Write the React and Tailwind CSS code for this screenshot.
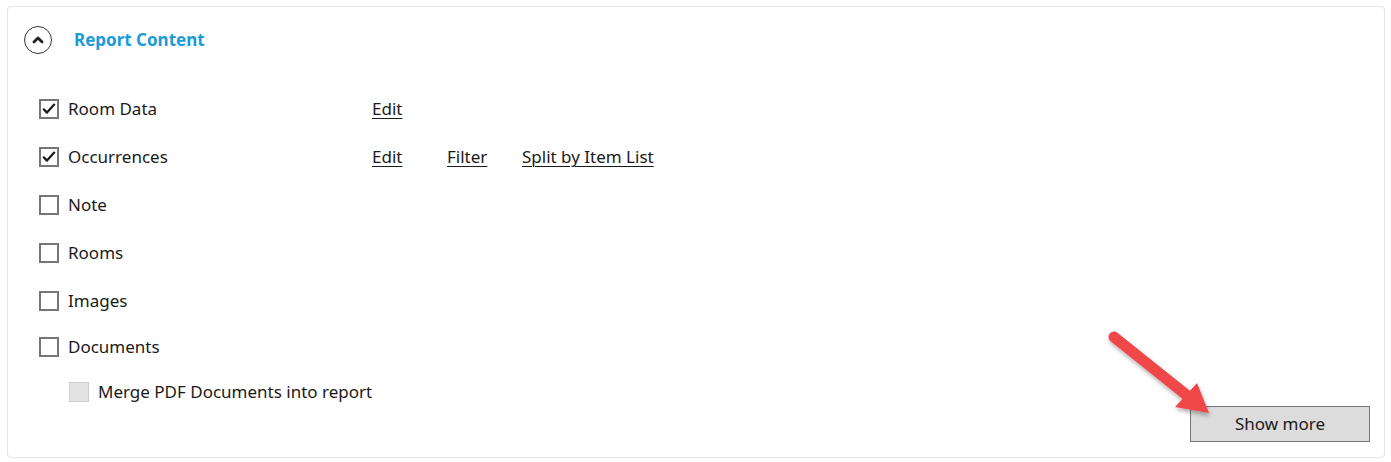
import React, { useState } from "react";

const Check = () => (
  <svg viewBox="0 0 20 20" className="w-[16px] h-[16px]">
    <path d="M3.5 10.5l4 4 9-10" fill="none" stroke="#1a1a1a" strokeWidth="2.8" strokeLinecap="round" strokeLinejoin="round" />
  </svg>
);

const Box = ({ checked, onClick }) => (
  <button
    type="button"
    onClick={onClick}
    className="w-[20px] h-[20px] border-2 border-[#767676] bg-white flex items-center justify-center shrink-0"
  >
    {checked && <Check />}
  </button>
);

const Row = ({ label, checked, onToggle, links = [], h = "h-[48px]" }) => (
  <div className={`flex items-center ${h}`}>
    <div className="flex items-center w-[333px]">
      <Box checked={checked} onClick={onToggle} />
      <span className="ml-[9px]">{label}</span>
    </div>
    {links.map((l) => (
      <div key={l} className="w-[75px] whitespace-nowrap">
        <a href="#" className="underline underline-offset-[3px] decoration-1">{l}</a>
      </div>
    ))}
  </div>
);

const App = () => {
  const [checks, setChecks] = useState({
    room: true,
    occ: true,
    note: false,
    rooms: false,
    images: false,
    docs: false,
  });
  const toggle = (k) => setChecks({ ...checks, [k]: !checks[k] });

  return (
    <div className="bg-white w-[1391px] h-[462px] pt-[6px] pl-[7px] font-['Noto_Sans',sans-serif] text-[17px] text-[#1a1a1a]">
      <div className="relative w-[1378px] h-[452px] border border-[#e3e3e3] rounded-[4px] pt-[19px] pl-[16px] pr-[14px] pb-[15px] flex flex-col">
        {/* header */}
        <div className="flex items-center h-[28px]">
          <button type="button" className="w-[28px] h-[28px] rounded-full border-[1.5px] border-[#333] flex items-center justify-center">
            <svg viewBox="0 0 12 12" className="w-[14px] h-[14px]">
              <path d="M2.5 7.8L6 4.3l3.5 3.5" fill="none" stroke="#222" strokeWidth="2.4" strokeLinecap="round" strokeLinejoin="round" />
            </svg>
          </button>
          <span className="ml-[22px] text-[17px] font-bold text-[#1b9bd8]">Report Content</span>
        </div>

        <div className="flex flex-1 justify-between mt-[31px]">
          <div className="flex flex-col pl-[15px]">
            <Row label="Room Data" checked={checks.room} onToggle={() => toggle("room")} links={["Edit"]} />
            <Row label="Occurrences" checked={checks.occ} onToggle={() => toggle("occ")} links={["Edit", "Filter", "Split by Item List"]} />
            <Row label="Note" checked={checks.note} onToggle={() => toggle("note")} />
            <Row label="Rooms" checked={checks.rooms} onToggle={() => toggle("rooms")} />
            <Row label="Images" checked={checks.images} onToggle={() => toggle("images")} />
            <Row label="Documents" checked={checks.docs} onToggle={() => toggle("docs")} h="h-[44px]" />
            <div className="flex items-center h-[46px] pl-[30px]">
              <div className="w-[20px] h-[20px] border border-[#cccccc] bg-[#e3e3e3]" />
              <span className="ml-[9px]">Merge PDF Documents into report</span>
            </div>
          </div>
          <button type="button" className="self-end w-[180px] h-[36px] bg-[#dcdcdc] border border-[#777] text-[17px] text-[#1a1a1a]">
            Show more
          </button>
        </div>

        {/* annotation arrow */}
        <svg className="absolute left-[1085px] top-[310px] w-[140px] h-[115px] pointer-events-none" viewBox="0 0 140 115">
          <defs>
            <filter id="sh" x="-20%" y="-20%" width="140%" height="140%">
              <feDropShadow dx="1" dy="3" stdDeviation="2" floodColor="#000" floodOpacity="0.3" />
            </filter>
          </defs>
          <g filter="url(#sh)">
            <line x1="21" y1="20" x2="96" y2="80" stroke="#f0464a" strokeWidth="11" strokeLinecap="round" />
            <polygon points="116,96 82,90 104,66" fill="#f0464a" />
          </g>
        </svg>
      </div>
    </div>
  );
};

export default App;
